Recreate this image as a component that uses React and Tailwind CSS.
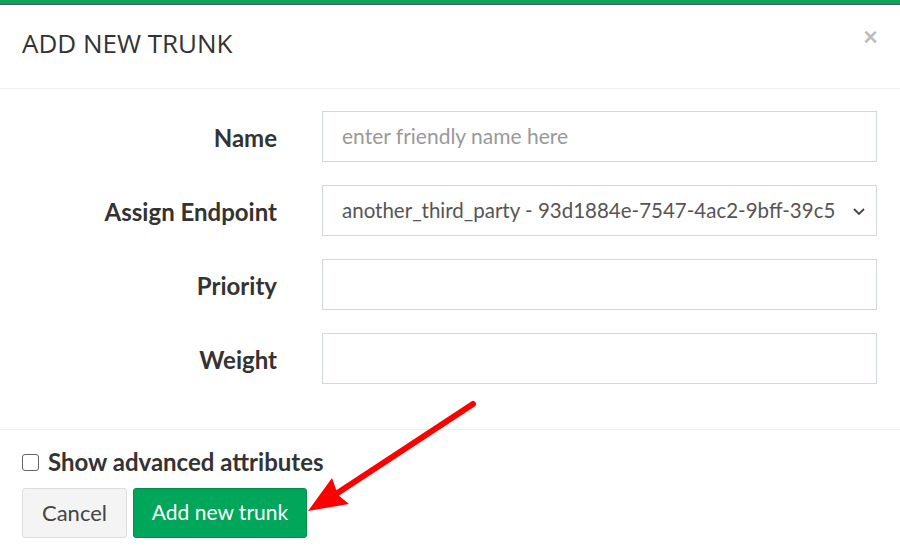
import React from "react";

function Row({ label, children }) {
  return (
    <div className="flex items-center h-[51px]">
      <label className="w-[277px] text-right text-[24px] font-bold text-[#333] mt-[3px]">
        {label}
      </label>
      <div className="ml-[45px] w-[555px] h-full">{children}</div>
    </div>
  );
}

export default function App() {
  return (
    <div
      className="relative w-[900px] h-[560px] bg-white overflow-hidden"
      style={{ fontFamily: "Lato, 'Open Sans', sans-serif" }}
    >
      <div className="h-[4px] bg-[#0aa35a]" />
      <div className="h-px bg-[#555]" />
      {/* header */}
      <div className="relative h-[84px] border-b border-[#eeeeee] pl-[22px] flex items-center">
        <h4
          className="text-[26px] font-normal text-[#333] mt-[-6px]"
          style={{ fontFamily: "'Open Sans', sans-serif" }}
        >
          ADD NEW TRUNK
        </h4>
        <span className="absolute right-[22px] top-[18px] text-[26px] font-bold text-[#bbb] leading-none">
          ×
        </span>
      </div>
      {/* body */}
      <div className="flex flex-col gap-[23px] pt-[22px] pb-[45px] border-b border-[#eeeeee]">
        <Row label="Name">
          <input
            className="w-full h-full border border-[#d2d6de] px-[19px] pb-[3px] text-[21px] text-[#555] placeholder:text-[#999] outline-none"
            placeholder="enter friendly name here"
          />
        </Row>
        <Row label="Assign Endpoint">
          <div className="w-full h-full border border-[#d2d6de] pl-[19px] pr-[10px] flex items-center text-[20.5px] text-[#555]">
            <span className="flex-1 whitespace-nowrap">
              another_third_party - 93d1884e-7547-4ac2-9bff-39c5
            </span>
            <svg width="14" height="10" viewBox="0 0 14 10" className="ml-[8px] shrink-0">
              <path d="M2 3l5 5 5-5" fill="none" stroke="#444" strokeWidth="1.8" />
            </svg>
          </div>
        </Row>
        <Row label="Priority">
          <input className="w-full h-full border border-[#d2d6de] px-[19px] text-[21px] outline-none" />
        </Row>
        <Row label="Weight">
          <input className="w-full h-full border border-[#d2d6de] px-[19px] text-[21px] outline-none" />
        </Row>
      </div>
      {/* footer */}
      <div className="pl-[22px] pt-[14px]">
        <label className="flex items-center gap-[9px]">
          <span className="w-[17px] h-[17px] border border-[#666] rounded-[3px] bg-white" />
          <span className="text-[24px] font-bold text-[#333]">Show advanced attributes</span>
        </label>
        <div className="flex gap-[6px] mt-[8px]">
          <button className="w-[105px] h-[50px] bg-[#f4f4f4] border border-[#ddd] rounded-[3px] text-[22px] text-[#444] pb-[2px]">
            Cancel
          </button>
          <button className="w-[174px] h-[50px] bg-[#00a65a] border border-[#008d4c] rounded-[3px] text-[21px] text-white pb-[2px]">
            Add new trunk
          </button>
        </div>
      </div>
      {/* annotation arrow */}
      <svg className="absolute left-0 top-0 pointer-events-none" width="900" height="560">
        <line x1="473" y1="404" x2="336" y2="494" stroke="#ff0000" strokeWidth="6" strokeLinecap="round" />
        <polygon points="308,511 332,478 338,495 349,504" fill="#ff0000" />
      </svg>
    </div>
  );
}
